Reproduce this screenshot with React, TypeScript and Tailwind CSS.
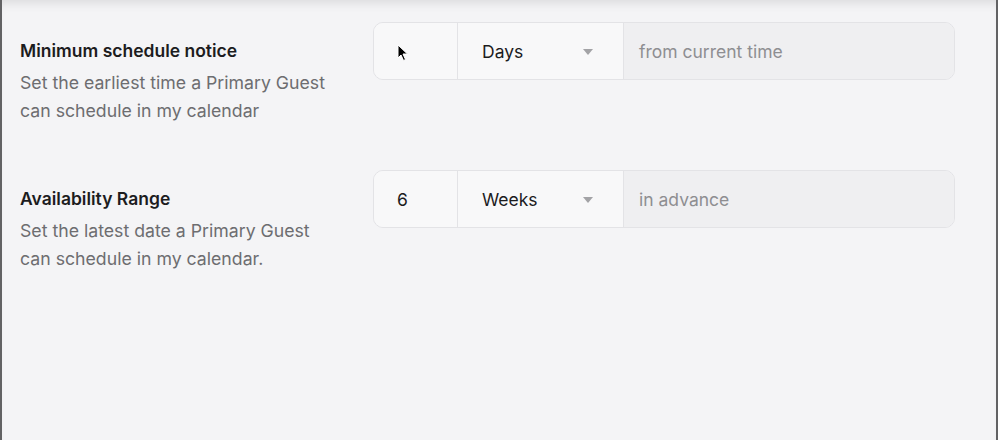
import React from "react";

type Row = {
  title: string;
  desc: string[];
  value: string;
  unit: string;
  suffix: string;
  cursor?: boolean;
};

const rows: Row[] = [
  {
    title: "Minimum schedule notice",
    desc: ["Set the earliest time a Primary Guest", "can schedule in my calendar"],
    value: "",
    unit: "Days",
    suffix: "from current time",
    cursor: true,
  },
  {
    title: "Availability Range",
    desc: ["Set the latest date a Primary Guest", "can schedule in my calendar."],
    value: "6",
    unit: "Weeks",
    suffix: "in advance",
  },
];

function Pointer() {
  return (
    <svg
      className="absolute left-[23px] top-[21px]"
      width="12"
      height="18"
      viewBox="0 0 12 18"
    >
      <path
        d="M1 1 L1 14 L4 11 L6.5 16.5 L8.5 15.5 L6 10 L10.5 10 Z"
        fill="#000"
        stroke="#fff"
        strokeWidth="1"
        strokeLinejoin="round"
      />
    </svg>
  );
}

function SettingRow({ row }: { row: Row }) {
  return (
    <div className="flex">
      <div className="w-[353px] shrink-0 pt-[15px]">
        <h3 className="text-[17.5px] leading-[28px] font-semibold text-[#1c1c1e]">
          {row.title}
        </h3>
        <p className="mt-1 text-[17.7px] leading-[28px] text-[#6d6d70]">
          {row.desc[0]}
          <br />
          {row.desc[1]}
        </p>
      </div>
      <div className="flex w-[582px] h-[58px] rounded-[10px] border border-[#e3e3e6] overflow-hidden text-[17.5px]">
        <div className="relative w-[83px] shrink-0 flex items-center pt-[2px] pl-[23px] bg-[#f8f8f9] text-[#1c1c1e]">
          {row.value}
          {row.cursor && <Pointer />}
        </div>
        <div className="w-[166px] shrink-0 flex items-center justify-between pt-[2px] pl-[24px] pr-[30px] border-l border-[#e3e3e6] bg-[#f8f8f9] text-[#1c1c1e]">
          <span>{row.unit}</span>
          <span className="w-0 h-0 border-l-[5px] border-r-[5px] border-t-[6px] border-l-transparent border-r-transparent border-t-[#a3a3a6]" />
        </div>
        <div className="flex-1 flex items-center pt-[2px] pl-[15px] border-l border-[#e3e3e6] bg-[#efeff1] text-[#8e8e91]">
          {row.suffix}
        </div>
      </div>
    </div>
  );
}

export default function App() {
  return (
    <div
      className="w-[998px] h-[440px] bg-[#f4f4f6] border-l-2 border-r-2 border-[#626264] shadow-[inset_0_10px_12px_-8px_rgba(0,0,0,0.12)] overflow-hidden"
      style={{ fontFamily: "Inter, 'Noto Sans', sans-serif" }}
    >
      <div className="flex flex-col gap-[45px] pt-[22px] pl-[18px]">
        {rows.map((r) => (
          <SettingRow key={r.title} row={r} />
        ))}
      </div>
    </div>
  );
}
